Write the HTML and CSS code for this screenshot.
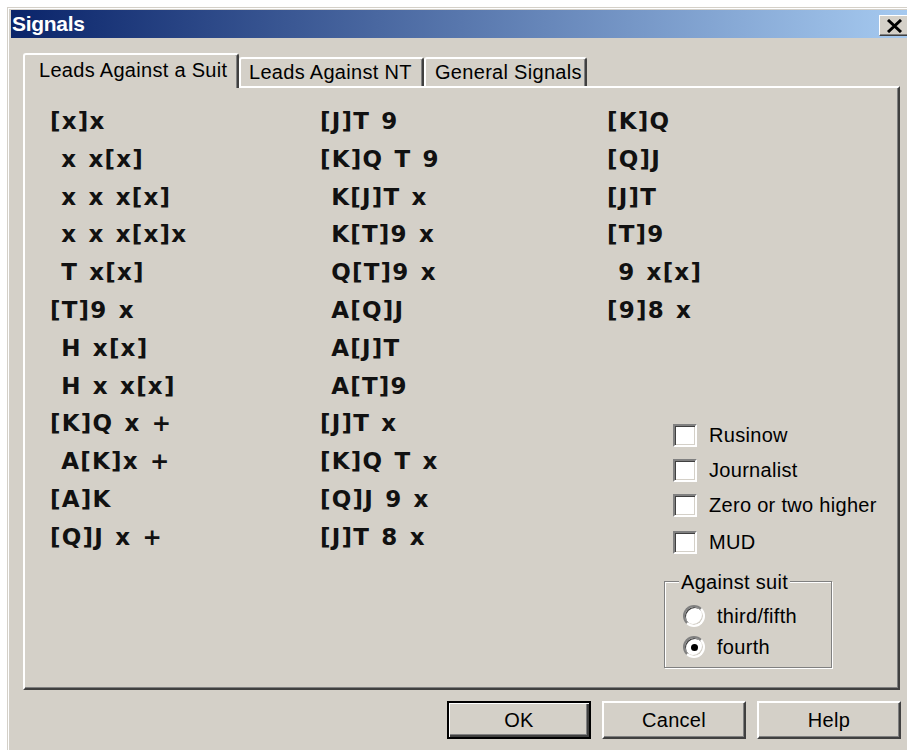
FILE: index.html
```html
<!DOCTYPE html>
<html lang="en">
<head>
<meta charset="utf-8">
<title>Signals</title>
<link rel="stylesheet" href="styles.css">
</head>
<body>
<div class="window">
  <div class="titlebar">
    <span class="title">Signals</span>
    <button class="close" type="button" aria-label="Close">
      <svg width="17" height="14" viewBox="0 0 17 14"><path d="M2 1 L15 13 M15 1 L2 13" stroke="#000" stroke-width="3" fill="none"/></svg>
    </button>
  </div>
  <div class="client">
    <div class="tabs">
      <div class="tab active">Leads Against a Suit</div>
      <div class="tab tab-nt">Leads Against NT</div>
      <div class="tab tab-gen">General Signals</div>
    </div>
    <div class="panel">
      <div class="leads">
        <ul class="col">
          <li>[x]x</li>
          <li> x x[x]</li>
          <li> x x x[x]</li>
          <li> x x x[x]x</li>
          <li> T x[x]</li>
          <li>[T]9 x</li>
          <li> H x[x]</li>
          <li> H x x[x]</li>
          <li>[K]Q x +</li>
          <li> A[K]x +</li>
          <li>[A]K</li>
          <li>[Q]J x +</li>
        </ul>
        <ul class="col">
          <li>[J]T 9</li>
          <li>[K]Q T 9</li>
          <li> K[J]T x</li>
          <li> K[T]9 x</li>
          <li> Q[T]9 x</li>
          <li> A[Q]J</li>
          <li> A[J]T</li>
          <li> A[T]9</li>
          <li>[J]T x</li>
          <li>[K]Q T x</li>
          <li>[Q]J 9 x</li>
          <li>[J]T 8 x</li>
        </ul>
        <div class="col3">
          <ul class="col">
            <li>[K]Q</li>
            <li>[Q]J</li>
            <li>[J]T</li>
            <li>[T]9</li>
            <li> 9 x[x]</li>
            <li>[9]8 x</li>
          </ul>
          <div class="options">
            <label class="check"><span class="box"></span>Rusinow</label>
            <label class="check"><span class="box"></span>Journalist</label>
            <label class="check"><span class="box"></span>Zero or two higher</label>
            <label class="check last"><span class="box"></span>MUD</label>
            <fieldset class="group">
              <legend>Against suit</legend>
              <label class="radio"><span class="dot"></span>third/fifth</label>
              <label class="radio"><span class="dot on"></span>fourth</label>
            </fieldset>
          </div>
        </div>
      </div>
    </div>
    <div class="buttons">
      <button class="btn default" type="button">OK</button>
      <button class="btn" type="button">Cancel</button>
      <button class="btn" type="button">Help</button>
    </div>
  </div>
</div>
</body>
</html>
```
FILE: styles.css
```css
html, body {
  margin: 0;
  padding: 0;
  width: 907px;
  height: 750px;
  overflow: hidden;
  background: #ffffff;
}

body {
  font-family: "Liberation Sans", Arial, sans-serif;
  font-size: 20px;
  letter-spacing: 0.3px;
  color: #000;
}

/* dialog frame */
.window {
  margin: 7px 0 0 7px;
  width: 904px;
  height: 760px;
  box-sizing: border-box;
  background: #d4d0c8;
  border-top: 1px solid #d4d0c8;
  border-left: 1px solid #d4d0c8;
  box-shadow: inset 1px 1px 0 #ffffff;
  padding: 2px 0 0 3px;
}

.titlebar {
  height: 28px;
  display: flex;
  align-items: center;
  justify-content: space-between;
  background: linear-gradient(to right, #0a246a, #a6caf0);
}

.title {
  color: #fff;
  font-weight: bold;
  font-size: 21px;
  padding-left: 1px;
  letter-spacing: -0.3px;
}

.close {
  width: 30px;
  height: 21px;
  margin: 3px 2px 0 0;
  padding: 0;
  background: #d4d0c8;
  border: 1px solid;
  border-color: #ffffff #404040 #404040 #ffffff;
  box-shadow: inset -1px -1px 0 #808080;
  display: flex;
  align-items: center;
  justify-content: center;
}

.close svg { display: block; }

/* tab strip */
.tabs {
  display: flex;
  align-items: flex-end;
  margin-top: 15px;
  padding-left: 12px;
}

.tab {
  box-sizing: border-box;
  height: 29px;
  background: #d4d0c8;
  border-top: 2px solid #ffffff;
  border-left: 2px solid #ffffff;
  border-right: 2px solid #404040;
  box-shadow: inset -1px 0 0 #808080;
  border-radius: 3px 3px 0 0;
  line-height: 26px;
  white-space: nowrap;
}

.tab.active {
  position: relative;
  z-index: 1;
  width: 216px;
  height: 35px;
  margin-bottom: -2px;
  padding-left: 14px;
  line-height: 30px;
}

.tab-nt {
  width: 185px;
  padding-left: 8px;
}

.tab-gen {
  width: 163px;
  padding-left: 9px;
}

/* property page */
.panel {
  box-sizing: border-box;
  margin-left: 12px;
  width: 877px;
  height: 604px;
  border-top: 2px solid #ffffff;
  border-left: 2px solid #ffffff;
  border-right: 2px solid #404040;
  border-bottom: 2px solid #404040;
  box-shadow: inset -1px -1px 0 #808080;
  padding: 15px 0 0 25px;
}

.leads {
  display: grid;
  grid-template-columns: 270px 287px 1fr;
}

.col {
  list-style: none;
  margin: 0;
  padding: 0;
}

/* card holdings, lead card in brackets */
.col li {
  font-family: "DejaVu Sans", Verdana, sans-serif;
  font-weight: bold;
  font-size: 23px;
  line-height: 37.8px;
  height: 37.8px;
  letter-spacing: 1.2px;
  word-spacing: 2px;
  white-space: pre;
  color: #111;
}

.col3 {
  display: flex;
  flex-direction: column;
}

.options {
  margin: 88px 0 0 57px;
  display: flex;
  flex-direction: column;
}

.check {
  display: flex;
  align-items: center;
  gap: 12px;
  height: 35px;
  margin-left: 9px;
}

.check.last {
  margin-top: 2px;
}

.box {
  box-sizing: border-box;
  width: 24px;
  height: 23px;
  background: #ffffff;
  border: 2px solid;
  border-color: #808080 #ffffff #ffffff #808080;
  box-shadow: inset 1px 1px 0 #404040, inset -1px -1px 0 #d4d0c8;
}

/* "Against suit" group box */
.group {
  margin: 11px 0 0 0;
  width: 168px;
  box-sizing: border-box;
  border: 1px solid #808080;
  box-shadow: 1px 1px 0 #ffffff, inset 1px 1px 0 #ffffff;
  padding: 8px 0 4px 18px;
  min-width: 0;
}

.group legend {
  margin-left: -4px;
  padding: 0 2px;
  line-height: 22px;
  background: #d4d0c8;
}

.radio {
  display: flex;
  align-items: center;
  gap: 12px;
  height: 31px;
}

.dot {
  box-sizing: border-box;
  width: 22px;
  height: 22px;
  border-radius: 50%;
  background: #ffffff;
  border: 2px solid;
  border-color: #808080 #ffffff #ffffff #808080;
  box-shadow: inset 1px 1px 0 #404040, inset -1px -1px 0 #d4d0c8;
  display: flex;
  align-items: center;
  justify-content: center;
}

.dot.on::after {
  content: "";
  width: 7px;
  height: 7px;
  border-radius: 50%;
  background: #000;
}

/* dialog buttons */
.buttons {
  display: flex;
  gap: 11px;
  margin-top: 11px;
  padding-left: 436px;
}

.btn {
  box-sizing: border-box;
  width: 144px;
  height: 38px;
  font-family: "Liberation Sans", Arial, sans-serif;
  font-size: 20px;
  letter-spacing: 0.3px;
  color: #000;
  background: #d4d0c8;
  border: 2px solid;
  border-color: #ffffff #404040 #404040 #ffffff;
  box-shadow: inset -1px -1px 0 #808080;
  padding: 0;
}

.btn.default {
  border: 2px solid #000;
  box-shadow: inset 1px 1px 0 #ffffff, inset -2px -2px 0 #404040, inset -3px -3px 0 #808080;
}
```
